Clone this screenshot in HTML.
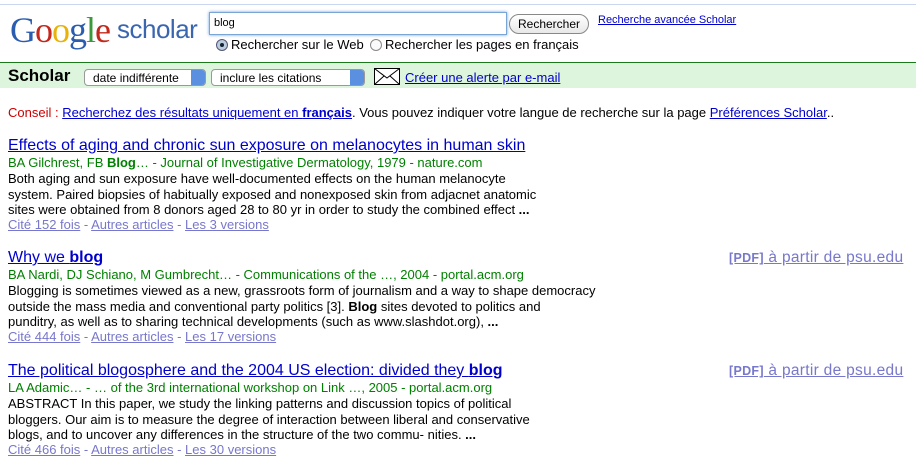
<!DOCTYPE html>
<html><head><meta charset="utf-8"><style>
body{margin:0;width:916px;height:462px;background:#fff;font-family:"Liberation Sans",Arial,sans-serif;position:relative;overflow:hidden}
.a{position:absolute;white-space:nowrap;font-size:13px;line-height:15px}
a{color:#00c;text-decoration:underline}
.t{font-size:16px;line-height:19px}
.g{color:#008000}
.v{color:#7777cc}
.v a{color:#7777cc}
</style></head><body>
<div style="position:absolute;left:0;top:4px;width:916px;height:1px;background:#c9d7f1"></div>
<div class="a" style="left:10px;top:10px;font-family:'Liberation Serif',serif;font-size:36px;line-height:40px;letter-spacing:-1px"><span style="color:#2a5db0">G</span><span style="color:#c4281c">o</span><span style="color:#e8b20a">o</span><span style="color:#2a5db0">g</span><span style="color:#3a9a3a">l</span><span style="color:#c4281c">e</span></div>
<div class="a" style="left:117px;top:14px;font-size:26px;line-height:30px;color:#3a66b0;letter-spacing:-0.5px">scholar</div>
<div style="position:absolute;left:209px;top:12px;width:296px;height:21px;border:1px solid #7aa6d6;box-shadow:0 0 3px #6a9fe0;background:#fff"></div>
<div class="a" style="left:214px;top:16px;font-size:11px">blog</div>
<div style="position:absolute;left:509px;top:14px;width:78px;height:18px;border:1px solid #888;border-radius:10px;background:linear-gradient(#fff,#e8e8e8);font-size:12px;line-height:18px;text-align:center">Rechercher</div>
<div class="a" style="left:598px;top:13px;font-size:11px"><a href="#">Recherche avancée Scholar</a></div>
<div style="position:absolute;left:216px;top:39px;width:10px;height:10px;border:1px solid #557;border-radius:50%;background:#bcd"><div style="margin:3px;width:4px;height:4px;border-radius:50%;background:#123"></div></div>
<div class="a" style="left:231px;top:37px">Rechercher sur le Web</div>
<div style="position:absolute;left:370px;top:39px;width:10px;height:10px;border:1px solid #888;border-radius:50%;background:#fafafa"></div>
<div class="a" style="left:385px;top:37px">Rechercher les pages en français</div>
<div style="position:absolute;left:0;top:62px;width:916px;height:1px;background:#1a7a1a"></div>
<div style="position:absolute;left:0;top:63px;width:916px;height:25px;background:#dcf5dc"></div>
<div class="a" style="left:8px;top:66px;font-size:17px;line-height:19px;font-weight:bold">Scholar</div>
<div style="position:absolute;left:84px;top:69px;height:17px;border:1px solid #999;border-radius:4px;background:#fff;font-size:12px;line-height:16px;padding-left:8px;box-sizing:border-box;width:122px">date indifférente<span style="position:absolute;right:0;top:0;width:14px;height:15px;background:#5b8fe0;border-radius:0 3px 3px 0"></span></div>
<div style="position:absolute;left:211px;top:69px;width:154px;height:17px;border:1px solid #999;border-radius:4px;background:#fff;font-size:12px;line-height:16px;padding-left:8px;box-sizing:border-box">inclure les citations<span style="position:absolute;right:0;top:0;width:14px;height:15px;background:#5b8fe0;border-radius:0 3px 3px 0"></span></div>
<svg style="position:absolute;left:374px;top:68px" width="26" height="17"><rect x=".5" y=".5" width="25" height="16" fill="#fff" stroke="#000"/><path d="M.5 .5L13 10L25.5 .5M.5 16.5L10 8M25.5 16.5L16 8" fill="none" stroke="#000"/></svg>
<div class="a" style="left:405px;top:70px"><a href="#">Créer une alerte par e-mail</a></div>

<div class="a" style="left:8px;top:105px"><span style="color:#c00">Conseil :</span> <a href="#">Recherchez des résultats uniquement en <b>français</b></a>. Vous pouvez indiquer votre langue de recherche sur la page <a href="#">Préférences Scholar</a>..</div>

<div class="a t" style="left:8px;top:136px"><a href="#">Effects of aging and chronic sun exposure on melanocytes in human skin</a></div>
<div class="a g" style="left:8px;top:155px">BA Gilchrest, FB <b>Blog</b>… - Journal of Investigative Dermatology, 1979 - nature.com</div>
<div class="a" style="left:8px;top:171px;line-height:15.5px">Both aging and sun exposure have well-documented effects on the human melanocyte<br>system. Paired biopsies of habitually exposed and nonexposed skin from adjacnet anatomic<br>sites were obtained from 8 donors aged 28 to 80 yr in order to study the combined effect <b>...</b></div>
<div class="a v" style="left:8px;top:217px"><a href="#">Cité 152 fois</a> - <a href="#">Autres articles</a> - <a href="#">Les 3 versions</a></div>

<div class="a t" style="left:8px;top:248px"><a href="#">Why we <b>blog</b></a></div>
<div class="a v" style="left:729px;top:249px;font-size:15.5px;line-height:17px;letter-spacing:0.3px"><a href="#"><b style="font-size:12.5px">[PDF]</b> à partir de psu.edu</a></div>
<div class="a g" style="left:8px;top:267px">BA Nardi, DJ Schiano, M Gumbrecht… - Communications of the …, 2004 - portal.acm.org</div>
<div class="a" style="left:8px;top:283px;line-height:15.5px">Blogging is sometimes viewed as a new, grassroots form of journalism and a way to shape democracy<br>outside the mass media and conventional party politics [3]. <b>Blog</b> sites devoted to politics and<br>punditry, as well as to sharing technical developments (such as www.slashdot.org), <b>...</b></div>
<div class="a v" style="left:8px;top:329px"><a href="#">Cité 444 fois</a> - <a href="#">Autres articles</a> - <a href="#">Les 17 versions</a></div>

<div class="a t" style="left:8px;top:361px"><a href="#">The political blogosphere and the 2004 US election: divided they <b>blog</b></a></div>
<div class="a v" style="left:729px;top:362px;font-size:15.5px;line-height:17px;letter-spacing:0.3px"><a href="#"><b style="font-size:12.5px">[PDF]</b> à partir de psu.edu</a></div>
<div class="a g" style="left:8px;top:380px">LA Adamic… - … of the 3rd international workshop on Link …, 2005 - portal.acm.org</div>
<div class="a" style="left:8px;top:396px;line-height:15.5px">ABSTRACT In this paper, we study the linking patterns and discussion topics of political<br>bloggers. Our aim is to measure the degree of interaction between liberal and conservative<br>blogs, and to uncover any differences in the structure of the two commu- nities. <b>...</b></div>
<div class="a v" style="left:8px;top:442px"><a href="#">Cité 466 fois</a> - <a href="#">Autres articles</a> - <a href="#">Les 30 versions</a></div>
</body></html>
